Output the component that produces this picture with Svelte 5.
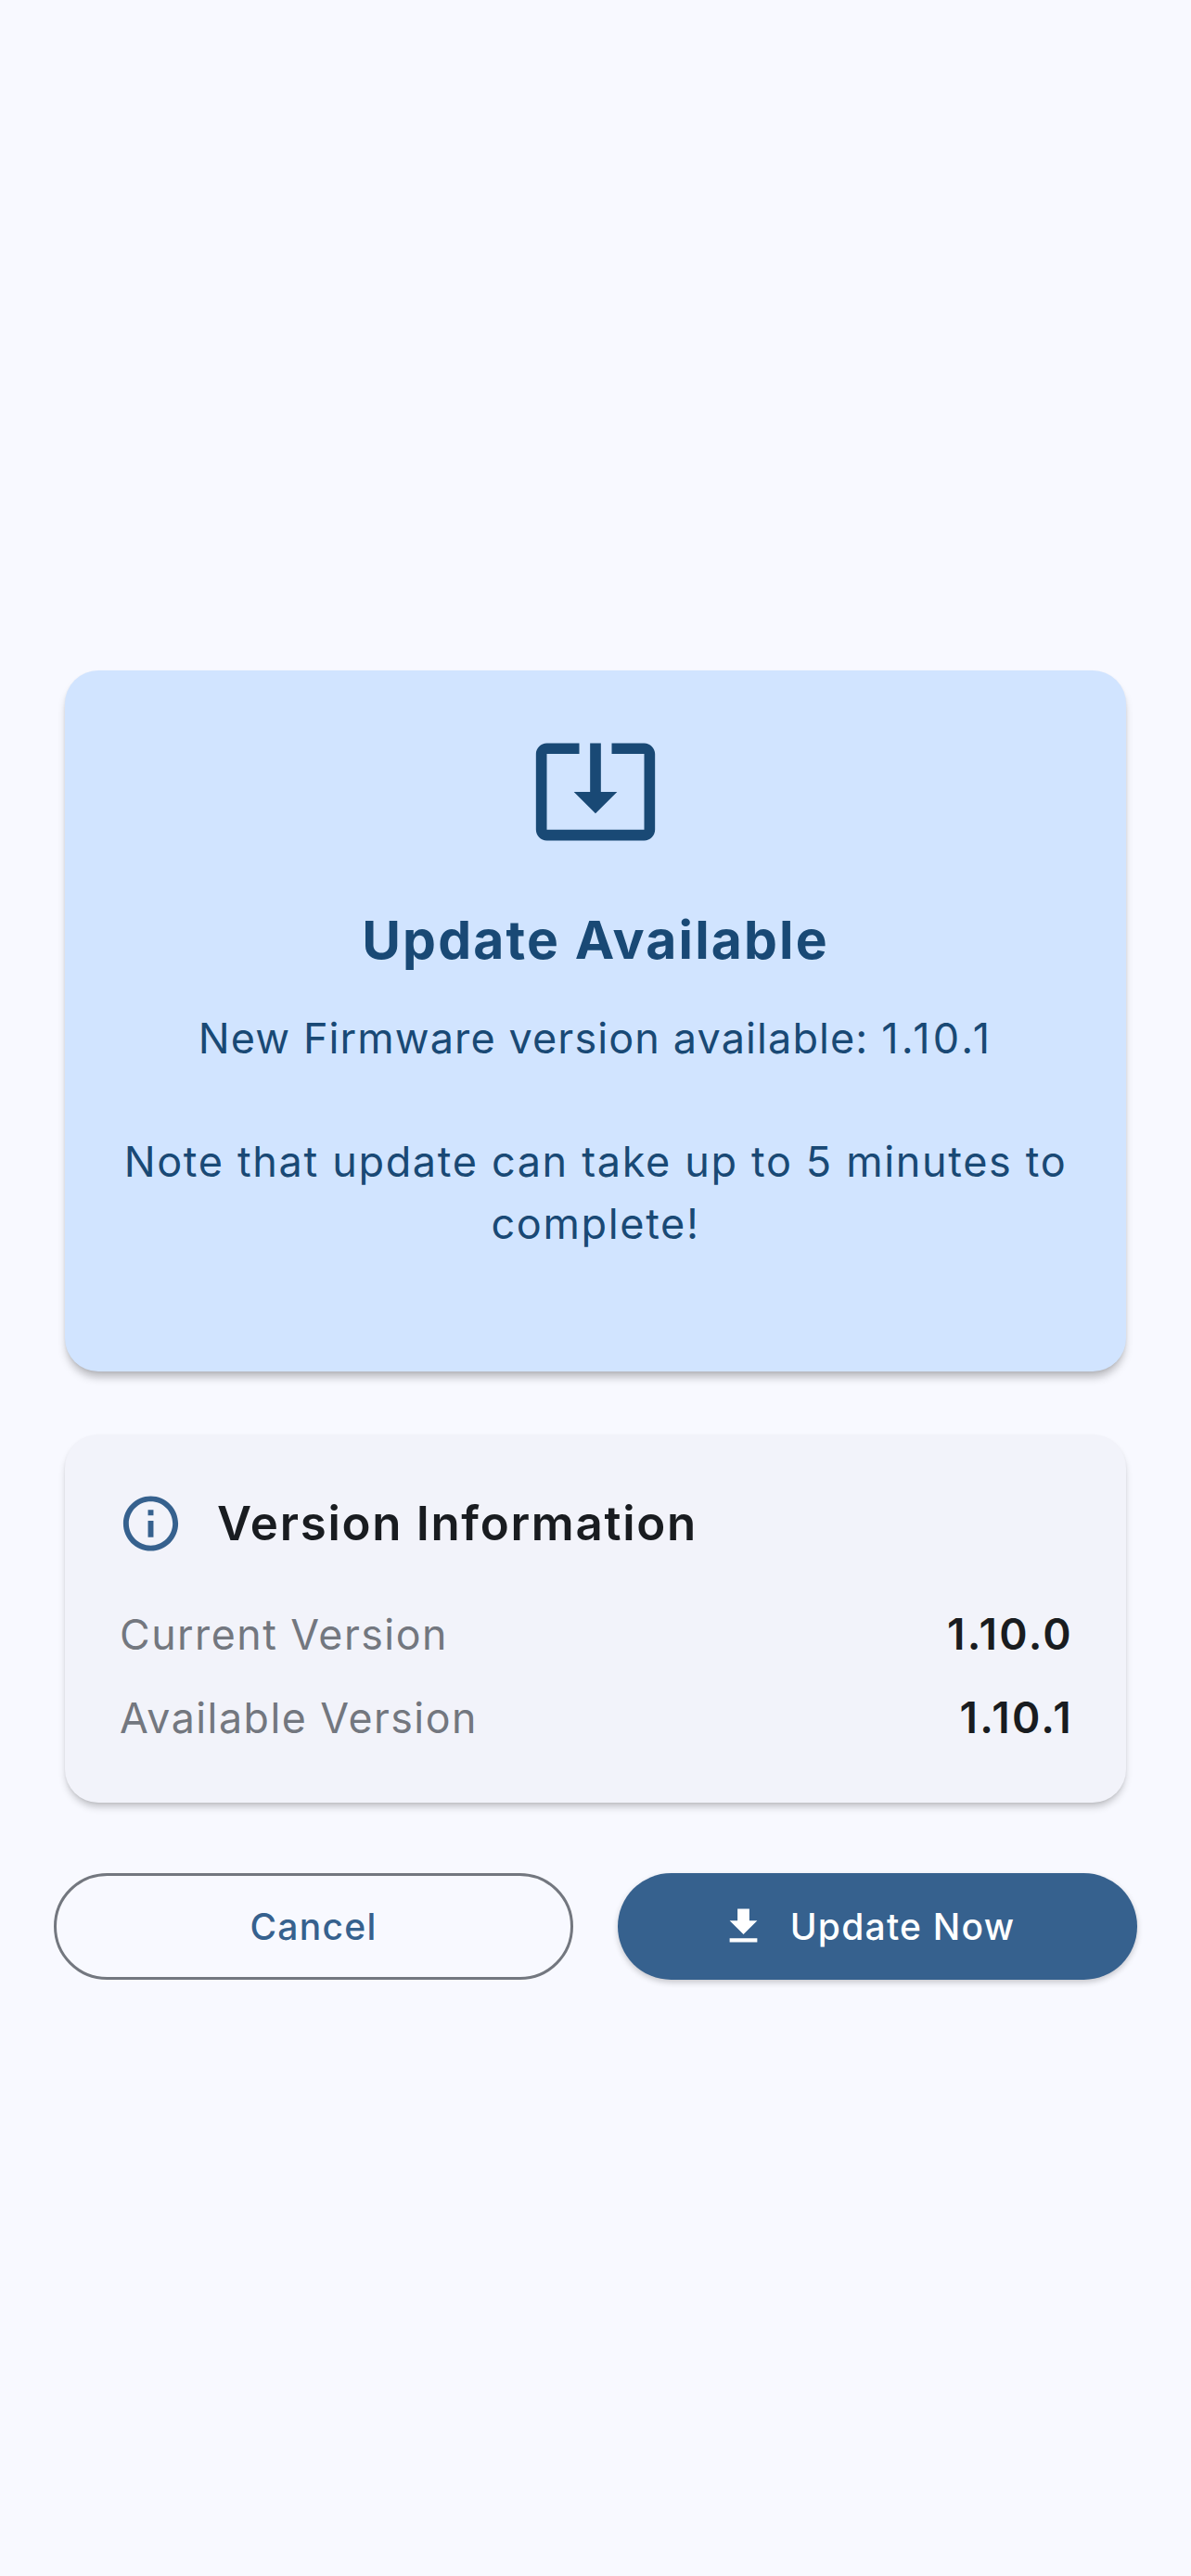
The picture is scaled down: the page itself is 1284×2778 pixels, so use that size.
<script>
  const rows = [
    { label: 'Current Version', value: '1.10.0' },
    { label: 'Available Version', value: '1.10.1' }
  ];
</script>

<main class="page">
  <section class="card hero">
    <svg class="hero-icon" viewBox="0 0 24 24" aria-hidden="true">
      <path d="M12 16.5l4-4h-3v-9h-2v9H8l4 4zm9-13h-6v1.99h6v14.03H3V5.49h6V3.5H3c-1.1 0-2 .9-2 2v14c0 1.1.9 2 2 2h18c1.1 0 2-.9 2-2v-14c0-1.1-.9-2-2-2z" />
    </svg>
    <h1>Update Available</h1>
    <p class="lead">New Firmware version available: <span class="ver">1.10.1</span></p>
    <p class="note">Note that update can take up to 5 minutes to complete!</p>
  </section>

  <section class="card info">
    <div class="info-head">
      <svg class="info-icon" viewBox="0 0 24 24" aria-hidden="true">
        <path d="M11 7h2v2h-2zm0 4h2v6h-2zm1-9C6.48 2 2 6.48 2 12s4.48 10 10 10 10-4.48 10-10S17.52 2 12 2zm0 18c-4.41 0-8-3.59-8-8s3.59-8 8-8 8 3.59 8 8-3.59 8-8 8z" />
      </svg>
      <h2>Version Information</h2>
    </div>
    {#each rows as row}
      <div class="row">
        <span class="label">{row.label}</span>
        <span class="value">{row.value}</span>
      </div>
    {/each}
  </section>

  <div class="actions">
    <button class="btn outline">Cancel</button>
    <button class="btn filled">
      <svg class="btn-icon" viewBox="0 0 24 24" aria-hidden="true">
        <path d="M19 9h-4V3H9v6H5l7 7 7-7zM5 18v2h14v-2H5z" />
      </svg>
      Update Now
    </button>
  </div>
</main>

<style>
  :global(body) {
    margin: 0;
    background: #f8f9ff;
  }
  .page {
    box-sizing: border-box;
    min-height: 2778px;
    padding: 723px 58px 0;
    display: flex;
    flex-direction: column;
    font-family: Inter, "Liberation Sans", sans-serif;
  }
  .card {
    margin: 0 12px;
    border-radius: 36px;
    box-sizing: border-box;
  }
  .hero {
    height: 756px;
    background: #d1e4ff;
    color: #194975;
    box-shadow: 0 8px 10px -2px rgba(0, 0, 0, 0.26), 0 1px 3px rgba(0, 0, 0, 0.06);
    padding: 58px 60px 0;
    text-align: center;
    display: flex;
    flex-direction: column;
    align-items: center;
  }
  .hero-icon {
    width: 140px;
    height: 140px;
    fill: #194975;
    flex: none;
  }
  h1 {
    margin: 51px 0 0;
    font-size: 57px;
    line-height: 84px;
    font-weight: 700;
    letter-spacing: 2.15px;
  }
  p {
    margin: 30px 0 0;
    font-size: 45px;
    line-height: 67px;
    font-weight: 400;
  }
  .lead {
    letter-spacing: 1.1px;
  }
  .ver {
    letter-spacing: 3.3px;
  }
  .note {
    margin-top: 66px;
    letter-spacing: 1.65px;
  }
  .info {
    margin-top: 68px;
    height: 397px;
    background: #f2f3fa;
    box-shadow: 0 6px 8px -2px rgba(0, 0, 0, 0.24), 0 1px 3px rgba(0, 0, 0, 0.05);
    padding: 60px 60px 0 59px;
  }
  .info-head {
    display: flex;
    align-items: center;
    gap: 36px;
    margin: 0 0 38px -2px;
  }
  .info-icon {
    width: 71px;
    height: 72px;
    fill: #36618e;
    flex: none;
  }
  h2 {
    margin: 0;
    font-size: 51px;
    line-height: 72px;
    font-weight: 600;
    color: #191c20;
    letter-spacing: 1.7px;
  }
  .row {
    display: flex;
    justify-content: space-between;
    align-items: baseline;
    height: 90px;
    line-height: 90px;
  }
  .label {
    font-size: 44.7px;
    color: #73777f;
    letter-spacing: 1.5px;
  }
  .value {
    font-size: 46px;
    font-weight: 600;
    color: #191c20;
    letter-spacing: 2.3px;
    margin-right: -3px;
  }
  .actions {
    margin-top: 76px;
    display: grid;
    grid-template-columns: 1fr 1fr;
    gap: 48px;
  }
  .btn {
    height: 115px;
    border-radius: 58px;
    font-family: inherit;
    font-size: 39px;
    letter-spacing: 1.25px;
    font-weight: 500;
    display: flex;
    align-items: center;
    justify-content: center;
    gap: 25px;
    padding: 0;
    box-sizing: border-box;
  }
  .outline {
    background: transparent;
    border: 3px solid #73777f;
    color: #36618e;
  }
  .filled {
    background: #36618e;
    border: none;
    color: #fff;
    box-shadow: 0 3px 6px rgba(0, 0, 0, 0.2);
    padding-right: 22px;
  }
  .btn-icon {
    width: 51px;
    height: 51px;
    fill: #fff;
    flex: none;
  }
</style>
